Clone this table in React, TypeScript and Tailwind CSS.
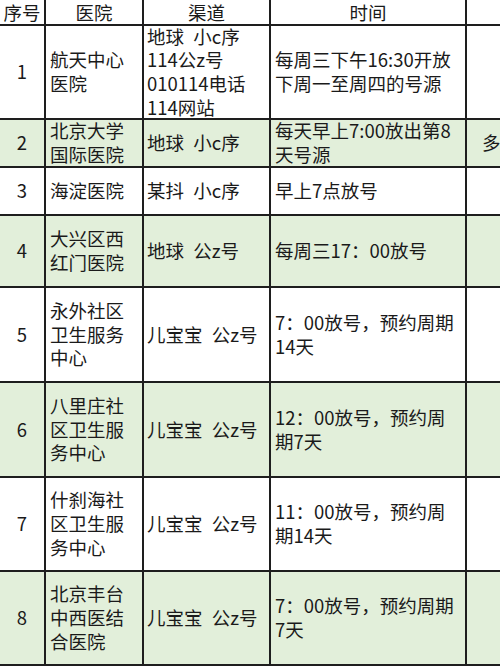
import React from "react";

// 医院放号时间表（截图中表格被裁切，右侧还有一列）
interface Row {
  no: string;
  hospital: string[];
  channel: string[];
  time: string[];
  extra?: string;
  height: string;
}

const rows: Row[] = [
  {
    no: "1",
    hospital: ["航天中心", "医院"],
    channel: ["地球\u2002小c序", "114公z号", "010114电话", "114网站"],
    time: ["每周三下午16:30开放", "下周一至周四的号源"],
    height: "h-[92px]",
  },
  {
    no: "2",
    hospital: ["北京大学", "国际医院"],
    channel: ["地球\u2002小c序"],
    time: ["每天早上7:00放出第8", "天号源"],
    extra: "多",
    height: "h-[46px]",
  },
  {
    no: "3",
    hospital: ["海淀医院"],
    channel: ["某抖\u2002小c序"],
    time: ["早上7点放号"],
    height: "h-[46px]",
  },
  {
    no: "4",
    hospital: ["大兴区西", "红门医院"],
    channel: ["地球\u2002公z号"],
    time: ["每周三17：00放号"],
    height: "h-[70px]",
  },
  {
    no: "5",
    hospital: ["永外社区", "卫生服务", "中心"],
    channel: ["儿宝宝\u2002公z号"],
    time: ["7：00放号，预约周期", "14天"],
    height: "h-[93px]",
  },
  {
    no: "6",
    hospital: ["八里庄社", "区卫生服", "务中心"],
    channel: ["儿宝宝\u2002公z号"],
    time: ["12：00放号，预约周", "期7天"],
    height: "h-[93px]",
  },
  {
    no: "7",
    hospital: ["什刹海社", "区卫生服", "务中心"],
    channel: ["儿宝宝\u2002公z号"],
    time: ["11：00放号，预约周", "期14天"],
    height: "h-[92px]",
  },
  {
    no: "8",
    hospital: ["北京丰台", "中西医结", "合医院"],
    channel: ["儿宝宝\u2002公z号"],
    time: ["7：00放号，预约周期", "7天"],
    height: "h-[92px]",
  },
];

const Lines: React.FC<{ lines: string[] }> = ({ lines }) => (
  <div>
    {lines.map((l, i) => (
      <div key={i} className="whitespace-pre">
        {l}
      </div>
    ))}
  </div>
);

const headCell = "h-[24px] bg-white flex items-center justify-center leading-[20px]";

export default function App() {
  return (
    <div
      className="w-[500px] h-[667px] overflow-hidden bg-white text-[#1a1a1a] text-[18.5px] leading-[23.7px]"
      style={{ fontFamily: '"Noto Sans CJK SC", "Noto Sans", sans-serif' }}
    >
      <div className="grid grid-cols-[44px_96px_125px_194px_80px] gap-[2px] bg-[#1e1e1e] w-[547px] pb-[2px]">
        {/* 表头 */}
        <div className={headCell}>序号</div>
        <div className={headCell}>医院</div>
        <div className={headCell}>渠道</div>
        <div className={headCell}>时间</div>
        <div className="h-[24px] bg-white"></div>

        {rows.map((r, i) => {
          const bg = i % 2 === 1 ? "bg-[#e2efda]" : "bg-white";
          return (
            <React.Fragment key={r.no}>
              <div className={`${r.height} ${bg} flex items-center justify-center`}>{r.no}</div>
              <div className={`${r.height} ${bg} flex items-center pl-[4px]`}>
                <Lines lines={r.hospital} />
              </div>
              <div className={`${r.height} ${bg} flex items-center pl-[3px]`}>
                <Lines lines={r.channel} />
              </div>
              <div className={`${r.height} ${bg} flex items-center pl-[4px]`}>
                <Lines lines={r.time} />
              </div>
              <div className={`${r.height} ${bg} flex items-center pl-[15px]`}>
                {r.extra}
              </div>
            </React.Fragment>
          );
        })}
      </div>
    </div>
  );
}
